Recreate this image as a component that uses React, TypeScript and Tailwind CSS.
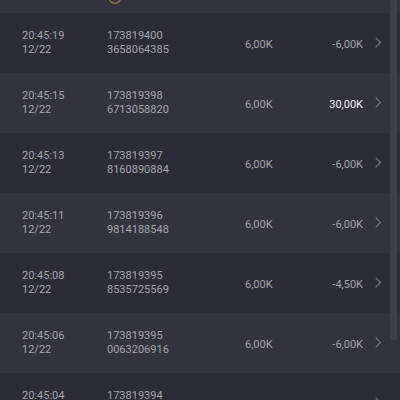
interface Row {
  time: string;
  date: string;
  id1: string;
  id2: string;
  bet: string;
  win: string;
  positive?: boolean;
}

const rows: Row[] = [
  { time: "20:45:19", date: "12/22", id1: "173819400", id2: "3658064385", bet: "6,00K", win: "-6,00K" },
  { time: "20:45:15", date: "12/22", id1: "173819398", id2: "6713058820", bet: "6,00K", win: "30,00K", positive: true },
  { time: "20:45:13", date: "12/22", id1: "173819397", id2: "8160890884", bet: "6,00K", win: "-6,00K" },
  { time: "20:45:11", date: "12/22", id1: "173819396", id2: "9814188548", bet: "6,00K", win: "-6,00K" },
  { time: "20:45:08", date: "12/22", id1: "173819395", id2: "8535725569", bet: "6,00K", win: "-4,50K" },
  { time: "20:45:06", date: "12/22", id1: "173819395", id2: "0063206916", bet: "6,00K", win: "-6,00K" },
  { time: "20:45:04", date: "12/22", id1: "173819394", id2: "0063206915", bet: "6,00K", win: "-6,00K" },
];

function Chevron() {
  return (
    <svg width="6" height="11" viewBox="0 0 6 11" className="ml-[12px] shrink-0 -mt-[1px]">
      <path d="M0.7 0.7 L5.3 5.5 L0.7 10.3" fill="none" stroke="#72727c" strokeWidth="1.2" />
    </svg>
  );
}

function HistoryRow({ row, idx }: { row: Row; idx: number }) {
  return (
    <div
      className={
        "h-[60px] shrink-0 flex items-center pl-[22px] pr-[19px] text-[11px] leading-[14px] text-[#a4a4ac] " +
        (idx % 2 === 0 ? "bg-[#2c2c36]" : "bg-[#33333d]")
      }
    >
      <div className="w-[85px] flex flex-col">
        <span>{row.time}</span>
        <span>{row.date}</span>
      </div>
      <div className="w-[138px] flex flex-col">
        <span>{row.id1}</span>
        <span>{row.id2}</span>
      </div>
      <span className="w-[60px] mt-[3px]">{row.bet}</span>
      <span className={"flex-1 text-right mt-[3px] " + (row.positive ? "text-[#f4f4f4]" : "")}>{row.win}</span>
      <Chevron />
    </div>
  );
}

export default function App() {
  return (
    <div
      className="relative w-[400px] h-[400px] overflow-hidden bg-[#2c2c36] flex flex-col"
      style={{ fontFamily: "Roboto, 'Liberation Sans', sans-serif" }}
    >
      <div className="h-[13px] shrink-0 bg-[#33333d] pl-[109px]">
        <svg width="12" height="13" viewBox="0 0 12 13">
          <circle cx="6" cy="-2" r="5.5" fill="none" stroke="#8a6a45" strokeWidth="1.5" />
        </svg>
      </div>
      {rows.map((r, i) => (
        <HistoryRow key={i} row={r} idx={i} />
      ))}
      <div className="absolute right-[3px] top-0 w-[7px] h-[340px] rounded-b-full bg-[#3f3f49]" />
    </div>
  );
}
